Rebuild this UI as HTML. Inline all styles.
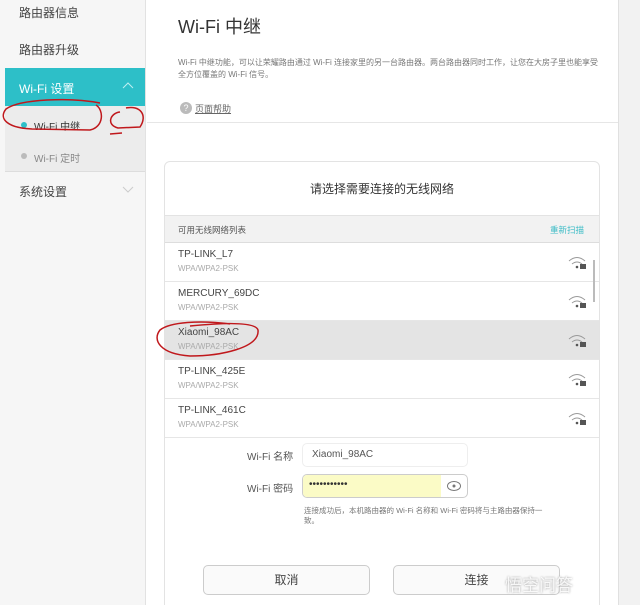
<!DOCTYPE html>
<html><head><meta charset="utf-8"><style>
*{margin:0;padding:0;box-sizing:border-box}
html,body{width:640px;height:605px;overflow:hidden}
body{background:#fff;font-family:"Liberation Sans","Noto Sans CJK SC",sans-serif;color:#333}
#w{position:relative;width:640px;height:605px;overflow:hidden}
.abs{position:absolute}
.side{left:0;top:0;width:146px;height:605px;background:#f6f6f6;border-right:1px solid #e2e2e2}
.si{position:absolute;left:5px;width:140px;font-size:12px;color:#444;padding-left:14px}
.right{left:618px;top:0;width:22px;height:605px;background:#f2f2f2;border-left:1px solid #e0e0e0}
.card{left:164px;top:161px;width:436px;height:460px;border:1px solid #e3e3e3;border-radius:6px;background:#fff}
.row{position:absolute;left:165px;width:434px;height:39px;border-bottom:1px solid #e6e6e6}
.row .n{position:absolute;left:13px;top:6px;font-size:10px;color:#444}
.row .s{position:absolute;left:13px;top:21px;font-size:8px;color:#aaa}
.row svg{position:absolute;left:402px;top:12px}
.btn{position:absolute;height:30px;border:1px solid #ccc;border-radius:5px;background:#fafafa;font-size:12px;text-align:center;line-height:28px;color:#444}
</style></head><body><div id="w">
<div class="abs side"></div>
<div class="si" style="top:4px">路由器信息</div>
<div class="si" style="top:41px">路由器升级</div>
<div class="abs" style="left:5px;top:68px;width:140px;height:38px;background:#2dbfc8"></div>
<div class="si" style="top:80px;color:#fff;font-size:12px">Wi-Fi 设置</div>
<svg class="abs" style="left:122px;top:82px" width="12" height="8"><path d="M1 6 L6 1 L11 6" stroke="#bfeef1" fill="none"/></svg>
<div class="abs" style="left:5px;top:106px;width:140px;height:66px;background:#ececec;border-bottom:1px solid #ddd"></div>
<div class="abs" style="left:21px;top:122px;width:6px;height:6px;border-radius:50%;background:#2dbfc8"></div>
<div class="abs" style="left:34px;top:118px;font-size:10px;color:#333">Wi-Fi 中继</div>
<div class="abs" style="left:21px;top:153px;width:6px;height:6px;border-radius:50%;background:#bbb"></div>
<div class="abs" style="left:34px;top:150px;font-size:10px;color:#888">Wi-Fi 定时</div>
<div class="si" style="top:183px">系统设置</div>
<svg class="abs" style="left:122px;top:186px" width="12" height="8"><path d="M1 1 L6 6 L11 1" stroke="#ccc" fill="none"/></svg>
<svg class="abs" style="left:0;top:95px" width="150" height="50"><path d="M100 8 C70 2 20 4 6 14 C-2 24 8 33 32 34 L90 35 C104 32 104 15 96 10" stroke="#c0181c" stroke-width="1.5" fill="none"/><path d="M120 17 C110 18 106 30 118 33 L140 32 C148 20 140 10 126 13 M122 38 L110 39" stroke="#c0181c" stroke-width="1.5" fill="none"/></svg>

<div class="abs right"></div>
<div class="abs" style="left:178px;top:13px;font-size:18px;color:#333">Wi-Fi 中继</div>
<div class="abs" style="left:178px;top:57px;width:420px;font-size:8px;line-height:12px;color:#777">Wi-Fi 中继功能，可以让荣耀路由通过 Wi-Fi 连接家里的另一台路由器。两台路由器同时工作，让您在大房子里也能享受全方位覆盖的 Wi-Fi 信号。</div>
<div class="abs" style="left:180px;top:102px;width:12px;height:12px;border-radius:50%;background:#bbb;color:#fff;font-size:9px;text-align:center;line-height:12px">?</div>
<div class="abs" style="left:195px;top:102px;font-size:9px;color:#666;text-decoration:underline">页面帮助</div>
<div class="abs" style="left:147px;top:122px;width:471px;height:1px;background:#e6e6e6"></div>

<div class="abs card"></div>
<div class="abs" style="left:165px;top:180px;width:434px;text-align:center;font-size:12px;color:#333">请选择需要连接的无线网络</div>
<div class="abs" style="left:165px;top:215px;width:434px;height:28px;background:#f2f2f2;border-top:1px solid #e3e3e3;border-bottom:1px solid #ddd"></div>
<div class="abs" style="left:178px;top:224px;font-size:8.5px;color:#555">可用无线网络列表</div>
<div class="abs" style="left:550px;top:224px;font-size:8.5px;color:#3cbcc6">重新扫描</div>

<div class="row" style="top:243px"><div class="n">TP-LINK_L7</div><div class="s">WPA/WPA2-PSK</div><svg width="20" height="14"><path d="M2 6 Q10 -1 18 6 M5 9 Q10 5 15 9" stroke="#999" fill="none"/><circle cx="10" cy="12" r="1.3" fill="#555"/><rect x="13" y="9" width="6" height="5" fill="#555"/></svg></div>
<div class="row" style="top:282px"><div class="n">MERCURY_69DC</div><div class="s">WPA/WPA2-PSK</div><svg width="20" height="14"><path d="M2 6 Q10 -1 18 6 M5 9 Q10 5 15 9" stroke="#999" fill="none"/><circle cx="10" cy="12" r="1.3" fill="#555"/><rect x="13" y="9" width="6" height="5" fill="#555"/></svg></div>
<div class="row" style="top:321px;background:#e4e4e4"><div class="n">Xiaomi_98AC</div><div class="s">WPA/WPA2-PSK</div><svg width="20" height="14"><path d="M2 6 Q10 -1 18 6 M5 9 Q10 5 15 9" stroke="#999" fill="none"/><circle cx="10" cy="12" r="1.3" fill="#555"/><rect x="13" y="9" width="6" height="5" fill="#555"/></svg></div>
<div class="row" style="top:360px"><div class="n">TP-LINK_425E</div><div class="s">WPA/WPA2-PSK</div><svg width="20" height="14"><path d="M2 6 Q10 -1 18 6 M5 9 Q10 5 15 9" stroke="#999" fill="none"/><circle cx="10" cy="12" r="1.3" fill="#555"/><rect x="13" y="9" width="6" height="5" fill="#555"/></svg></div>
<div class="row" style="top:399px"><div class="n">TP-LINK_461C</div><div class="s">WPA/WPA2-PSK</div><svg width="20" height="14"><path d="M2 6 Q10 -1 18 6 M5 9 Q10 5 15 9" stroke="#999" fill="none"/><circle cx="10" cy="12" r="1.3" fill="#555"/><rect x="13" y="9" width="6" height="5" fill="#555"/></svg></div>
<div class="abs" style="left:593px;top:260px;width:2px;height:42px;background:#bbb"></div>
<svg class="abs" style="left:150px;top:318px" width="120" height="50"><path d="M80 6 C50 2 20 4 10 12 C2 22 10 36 40 38 C70 38 110 30 108 12 C105 2 60 6 40 8" stroke="#c0181c" stroke-width="1.5" fill="none"/></svg>

<div class="abs" style="left:247px;top:448px;font-size:10px;color:#555">Wi-Fi 名称</div>
<div class="abs" style="left:302px;top:443px;width:166px;height:24px;border:1px solid #eee;border-radius:5px;padding-left:9px;font-size:10px;line-height:22px;color:#555">Xiaomi_98AC</div>
<div class="abs" style="left:247px;top:480px;font-size:10px;color:#555">Wi-Fi 密码</div>
<div class="abs" style="left:302px;top:474px;width:166px;height:24px;border:1px solid #ccc;border-radius:5px;overflow:hidden"><div style="width:138px;height:24px;background:#fbfbc6;font-size:10px;padding-left:6px;line-height:20px;color:#333">•••••••••••</div></div>
<svg class="abs" style="left:446px;top:479px" width="16" height="14"><ellipse cx="8" cy="7" rx="6.5" ry="4.5" stroke="#777" fill="none"/><circle cx="8" cy="7" r="1.5" fill="#777"/></svg>
<div class="abs" style="left:304px;top:506px;width:250px;font-size:7.5px;line-height:10px;color:#777">连接成功后，本机路由器的 Wi-Fi 名称和 Wi-Fi 密码将与主路由器保持一致。</div>
<div class="btn" style="left:203px;top:565px;width:167px">取消</div>
<div class="btn" style="left:393px;top:565px;width:167px">连接</div>
<div class="abs" style="left:505px;top:571px;font-size:17px;color:rgba(255,255,255,0.85);text-shadow:0 0 2px #999">悟空问答</div>
</div></body></html>
